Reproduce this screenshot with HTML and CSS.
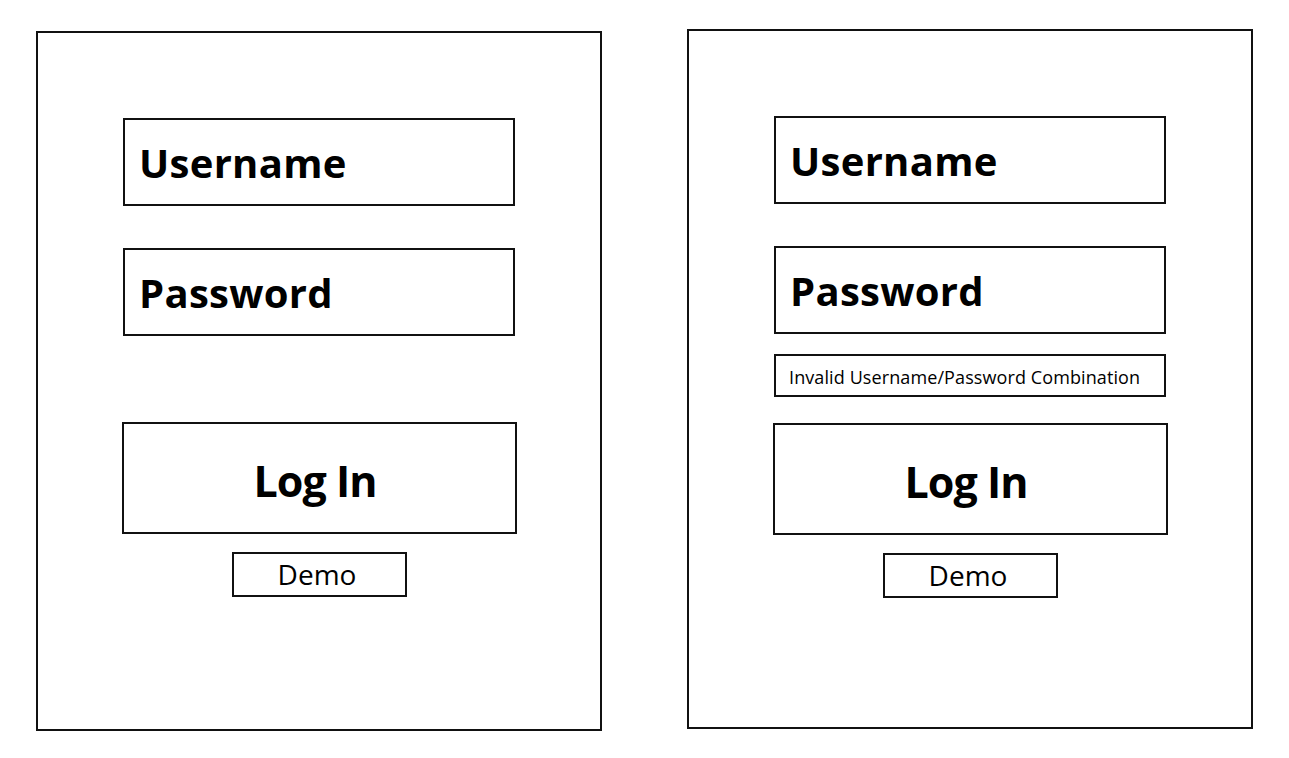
FILE: index.html
```html
<!DOCTYPE html>
<html>
<head>
<meta charset="utf-8">
<link rel="stylesheet" href="styles.css">
</head>
<body>
<div class="page">
  <div class="panel panel-left">
    <div class="field">Username</div>
    <div class="field field-gap">Password</div>
    <div class="login login-gap-large">Log In</div>
    <div class="demo">Demo</div>
  </div>
  <div class="panel panel-right">
    <div class="field">Username</div>
    <div class="field field-gap">Password</div>
    <div class="error">Invalid Username/Password Combination</div>
    <div class="login login-gap-small">Log In</div>
    <div class="demo">Demo</div>
  </div>
</div>
</body>
</html>
```
FILE: styles.css
```css
html, body {
  margin: 0;
  padding: 0;
  background: #fff;
}
body {
  font-family: "Open Sans", "DejaVu Sans", sans-serif;
  color: #000;
}
.page {
  display: flex;
  align-items: flex-start;
  gap: 85px;
  padding: 29px 0 0 36px;
}
.panel {
  box-sizing: border-box;
  width: 566px;
  height: 700px;
  border: 2px solid #111;
  display: flex;
  flex-direction: column;
  align-items: center;
  padding-top: 85px;
}
.panel-left {
  margin-top: 2px;
}
.field {
  box-sizing: border-box;
  width: 392px;
  height: 88px;
  border: 2px solid #111;
  display: flex;
  align-items: center;
  padding-left: 14px;
  padding-top: 1px;
  font-weight: 700;
  font-size: 40px;
  letter-spacing: 0.3px;
}
.field-gap {
  margin-top: 42px;
}
.error {
  box-sizing: border-box;
  width: 392px;
  height: 43px;
  margin-top: 20px;
  border: 2px solid #111;
  display: flex;
  align-items: center;
  padding-left: 13px;
  padding-top: 2px;
  font-size: 18px;
  letter-spacing: 0.1px;
}
.login {
  box-sizing: border-box;
  width: 395px;
  height: 112px;
  border: 2px solid #111;
  display: flex;
  align-items: center;
  justify-content: center;
  padding-top: 4px;
  padding-right: 8px;
  font-weight: 700;
  font-size: 43px;
  letter-spacing: -1px;
}
.login-gap-large {
  margin-top: 86px;
}
.login-gap-small {
  margin-top: 26px;
}
.demo {
  box-sizing: border-box;
  width: 175px;
  height: 45px;
  margin-top: 18px;
  border: 2px solid #111;
  display: flex;
  align-items: center;
  justify-content: center;
  padding-bottom: 1px;
  padding-right: 4px;
  font-size: 28px;
}
```
